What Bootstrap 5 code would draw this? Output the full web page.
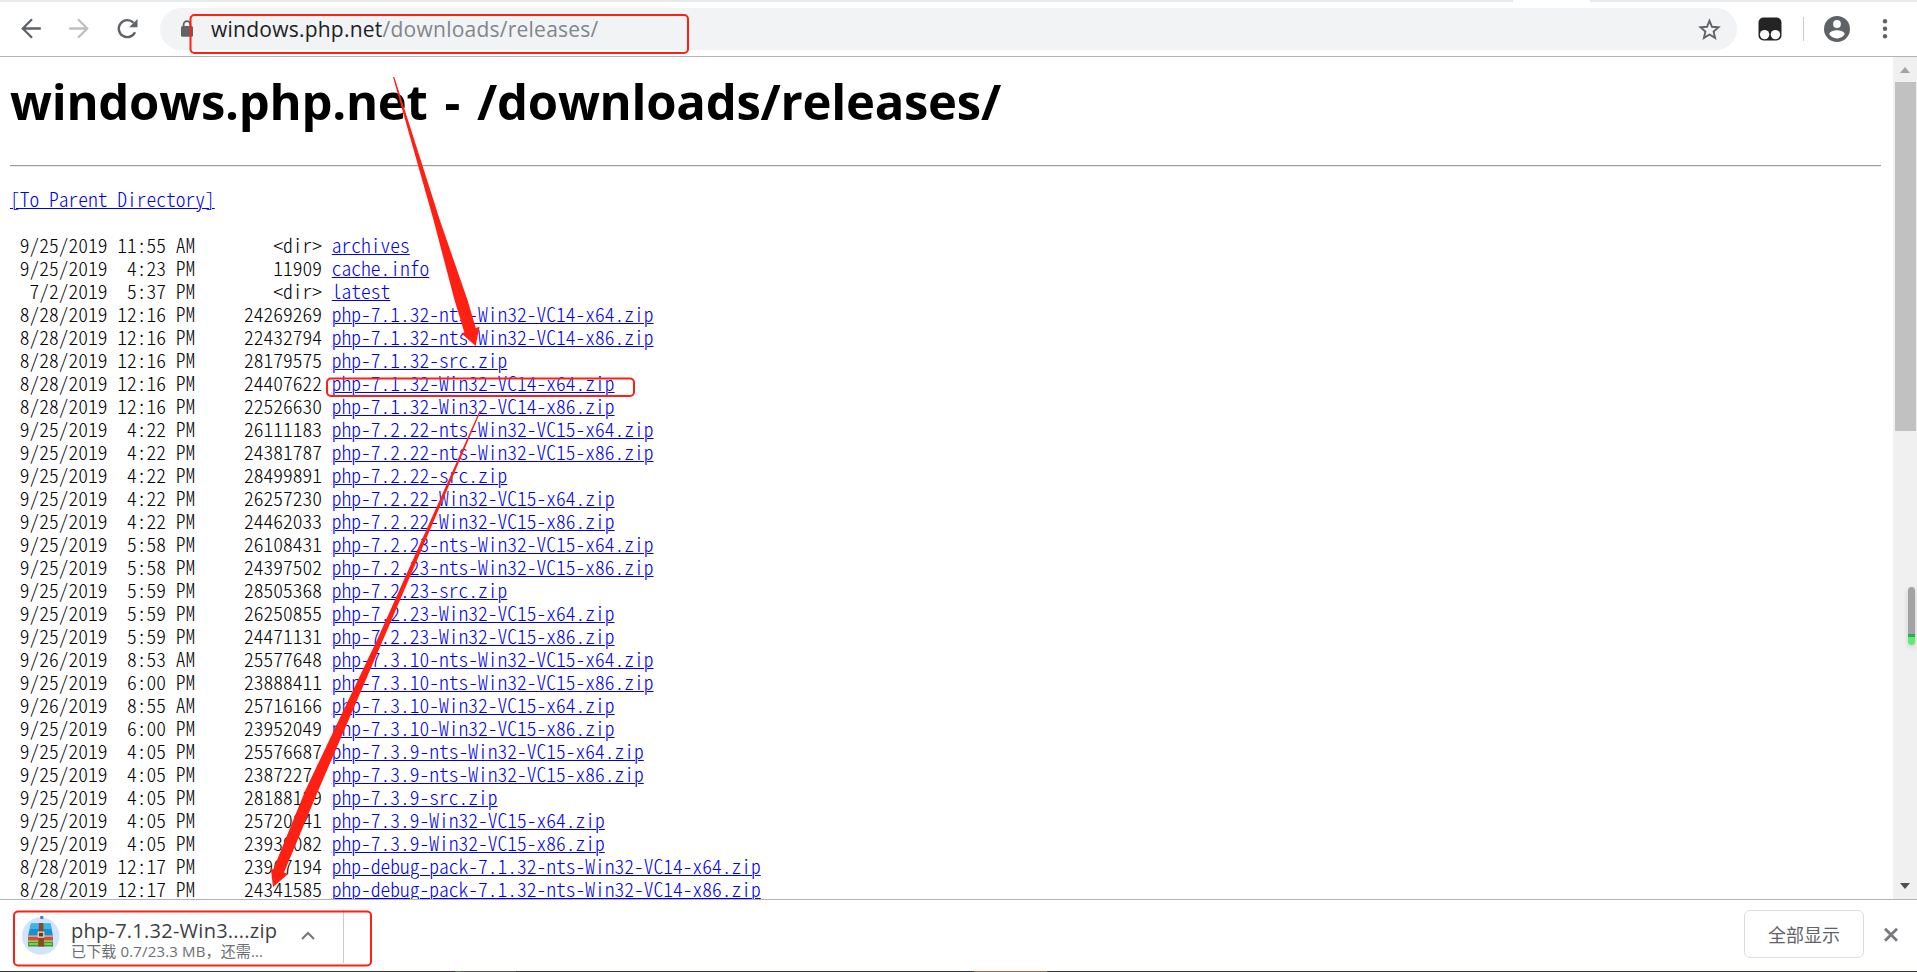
<!DOCTYPE html>
<html lang="zh-CN">
<head>
  <meta charset="UTF-8" />
  <meta name="viewport" content="width=device-width, initial-scale=1.0"/>
  <title>windows.php.net - /downloads/releases/</title>
  <link href="https://cdn.jsdelivr.net/npm/bootstrap@5.3.0/dist/css/bootstrap.min.css" rel="stylesheet">
  <style>
    body {
      background-color: #fff;
      font-family: "Open Sans", "Noto Sans CJK SC", sans-serif;
      color: #000;
    }

    /* Browser chrome */
    .tab-strip {
      height: 2px;
      background-color: #e7eaed;
    }

    .active-tab {
      width: 77px;
      margin-right: 327px;
      background-color: #fff;
    }

    .toolbar {
      height: 55px;
      padding-top: 6px;
      border-bottom: 1px solid #b4b4b6;
    }

    .toolbar svg {
      display: block;
    }

    .nav-icons {
      width: 160px;
      height: 42px;
      gap: 24px;
      padding-left: 20px;
    }

    .address-bar {
      height: 42px;
      border-radius: 21px;
      background-color: #f1f3f4;
      padding: 0 16px 0 20px;
    }

    .url-text {
      font-size: 21px;
      line-height: 42px;
      margin-left: 17px;
      letter-spacing: 0.24px;
      color: #202124;
    }

    .url-path {
      color: #80868b;
    }

    .toolbar-end {
      width: 180px;
      height: 42px;
      padding-left: 21px;
    }

    .toolbar-divider {
      width: 1px;
      height: 24px;
      margin: 0 20px 0 21px;
      background-color: #ccc;
    }

    /* Directory page */
    .page-area {
      height: 842px;
    }

    .page-body {
      padding: 6px 12px 0 10px;
    }

    .page-body h1 {
      font-size: 49px;
      font-weight: 700;
      line-height: 76px;
      letter-spacing: -0.25px;
      word-spacing: 4.5px;
      margin: 0 0 26px;
      white-space: nowrap;
    }

    .rule {
      height: 2px;
      border-top: 1px solid #9a9a9a;
      border-bottom: 1px solid #eee;
      margin-bottom: 20px;
    }

    .listing {
      font-family: "Noto Sans CJK SC", sans-serif;
      font-feature-settings: "hwid";
      font-weight: 300;
      font-size: 19.5px;
      line-height: 23px;
      margin: 0;
      overflow: visible;
    }

    .listing a {
      color: #0000ee;
      text-decoration-thickness: 1px;
    }

    .scroll-track {
      width: 24px;
      background-color: #f0f0f0;
      padding: 10px 1px 10px 2px;
    }

    .scroll-thumb {
      width: 21px;
      height: 349px;
      margin-top: 9px;
      background-color: #c1c1c1;
    }

    .arrow-up, .arrow-down {
      width: 0;
      height: 0;
      margin-left: 5px;
      border-left: 5.5px solid transparent;
      border-right: 5.5px solid transparent;
    }

    .arrow-up {
      border-bottom: 6px solid #a3a3a3;
    }

    .arrow-down {
      border-top: 6px solid #505050;
    }

    .side-gauge {
      left: 1908px;
      top: 587px;
      width: 7px;
      height: 58px;
      border-radius: 4px;
      background: linear-gradient(#a3a3a3 47px, #1fb45a 47px, #1fb45a 50px, #5fe878 50px);
      box-shadow: 0 2px 5px rgba(0, 0, 0, 0.15);
    }

    /* Download shelf */
    .shelf {
      height: 72px;
      border-top: 1px solid #b4b4b6;
      padding: 0 18px 0 21px;
    }

    .file-info {
      width: 212px;
      margin: 18px 0 0 11px;
      white-space: nowrap;
    }

    .file-name {
      font-size: 20px;
      line-height: 25px;
      letter-spacing: 0.25px;
      color: #3c4043;
    }

    .file-state {
      font-size: 15px;
      line-height: 16px;
      letter-spacing: 0.15px;
      color: #6b6e72;
    }

    .menu-caret {
      margin: 28px 0 0 17px;
    }

    .shelf-divider {
      width: 1px;
      height: 53px;
      margin: 10px 0 0 27px;
      background-color: #ccc;
    }

    .show-all {
      width: 120px;
      height: 48px;
      margin-top: 10px;
      border: 1px solid #dadce0;
      border-radius: 6px;
      font-size: 18px;
      color: #5f6368;
      padding: 2px 0 0;
    }

    .close-icon {
      margin: 27px 0 0 19px;
    }

    .desk-edge {
      height: 1px;
      background: linear-gradient(to right, #38362f 455px, #4b7a3f 455px, #4b7a3f 461px, #55564f 461px, #55564f 516px, #38362f 516px, #38362f 974px, #a86a33 974px, #a86a33 1047px, #38362f 1047px);
    }

    .notes {
      pointer-events: none;
    }
  </style>
</head>
<body class="vh-100 overflow-hidden position-relative">

  <div class="tab-strip d-flex justify-content-end">
    <div class="active-tab"></div>
  </div>

  <!-- Toolbar -->
  <div class="toolbar d-flex">
    <div class="nav-icons d-flex align-items-center">
      <svg width="24" height="24" viewBox="0 0 24 24" fill="none" stroke="#5f6368" stroke-width="2.3"><path d="M20.8 11.5H3M12 2.3L2.8 11.5l9.2 9.2"/></svg>
      <svg width="24" height="24" viewBox="0 0 24 24" fill="none" stroke="#bdbfc1" stroke-width="2.3"><path d="M1.2 11.5H19M10 2.3l9.2 9.2-9.2 9.2"/></svg>
      <svg width="24" height="24" viewBox="0 0 24 24"><path d="M19 15.2A8.5 8.5 0 1 1 17.5 5.8" fill="none" stroke="#5f6368" stroke-width="2.4"/><path d="M21.5 2v8.3h-8.3z" fill="#5f6368"/></svg>
    </div>
    <div class="address-bar d-flex align-items-center flex-grow-1">
      <svg width="14" height="18" viewBox="0 0 14 18"><path d="M3.6 7V4.6a3.4 3.4 0 0 1 6.8 0V7" fill="none" stroke="#5f6368" stroke-width="1.8"/><rect x="1" y="6" width="12" height="10.7" rx="1.5" fill="#5f6368"/></svg>
      <div class="url-text flex-grow-1">windows.php.net<span class="url-path">/downloads/releases/</span></div>
      <svg width="24" height="24" viewBox="0 0 24 24" fill="none" stroke="#5f6368" stroke-width="1.9"><path d="M12.5 3.8l2.5 6 6.5.5-4.9 4.3 1.5 6.3-5.6-3.4-5.6 3.4 1.5-6.3-4.9-4.3 6.5-.5z"/></svg>
    </div>
    <div class="toolbar-end d-flex align-items-center">
      <svg width="24" height="24" viewBox="0 0 24 24"><rect x=".5" y=".5" width="23" height="23" rx="5" fill="#242424"/><circle cx="6.6" cy="17.6" r="4.7" fill="#fff"/><circle cx="17.4" cy="17.6" r="4.7" fill="#fff"/></svg>
      <div class="toolbar-divider"></div>
      <svg width="26" height="26" viewBox="0 0 26 26"><circle cx="13" cy="13" r="13" fill="#5f6368"/><circle cx="13" cy="8" r="3.9" fill="#fff"/><path d="M5.3 18.3c0-2.8 5-4.1 7.7-4.1s7.7 1.3 7.7 4.1c-1.7 2.5-4.4 4.1-7.7 4.1s-6-1.6-7.7-4.1z" fill="#fff"/></svg>
      <svg class="ms-auto me-4" width="16" height="24" viewBox="0 0 16 24" fill="#5f6368"><circle cx="8" cy="4.3" r="2.2"/><circle cx="8" cy="11.8" r="2.2"/><circle cx="8" cy="19.3" r="2.2"/></svg>
    </div>
  </div>

  <!-- Page -->
  <div class="page-area d-flex overflow-hidden">
    <div class="page-body flex-grow-1">
      <h1>windows.php.net - /downloads/releases/</h1>
      <div class="rule"></div>
      <pre class="listing"><a href="#">[To Parent Directory]</a>

 9/25/2019 11:55 AM        &lt;dir&gt; <a href="#">archives</a>
 9/25/2019  4:23 PM        11909 <a href="#">cache.info</a>
  7/2/2019  5:37 PM        &lt;dir&gt; <a href="#">latest</a>
 8/28/2019 12:16 PM     24269269 <a href="#">php-7.1.32-nts-Win32-VC14-x64.zip</a>
 8/28/2019 12:16 PM     22432794 <a href="#">php-7.1.32-nts-Win32-VC14-x86.zip</a>
 8/28/2019 12:16 PM     28179575 <a href="#">php-7.1.32-src.zip</a>
 8/28/2019 12:16 PM     24407622 <a href="#">php-7.1.32-Win32-VC14-x64.zip</a>
 8/28/2019 12:16 PM     22526630 <a href="#">php-7.1.32-Win32-VC14-x86.zip</a>
 9/25/2019  4:22 PM     26111183 <a href="#">php-7.2.22-nts-Win32-VC15-x64.zip</a>
 9/25/2019  4:22 PM     24381787 <a href="#">php-7.2.22-nts-Win32-VC15-x86.zip</a>
 9/25/2019  4:22 PM     28499891 <a href="#">php-7.2.22-src.zip</a>
 9/25/2019  4:22 PM     26257230 <a href="#">php-7.2.22-Win32-VC15-x64.zip</a>
 9/25/2019  4:22 PM     24462033 <a href="#">php-7.2.22-Win32-VC15-x86.zip</a>
 9/25/2019  5:58 PM     26108431 <a href="#">php-7.2.23-nts-Win32-VC15-x64.zip</a>
 9/25/2019  5:58 PM     24397502 <a href="#">php-7.2.23-nts-Win32-VC15-x86.zip</a>
 9/25/2019  5:59 PM     28505368 <a href="#">php-7.2.23-src.zip</a>
 9/25/2019  5:59 PM     26250855 <a href="#">php-7.2.23-Win32-VC15-x64.zip</a>
 9/25/2019  5:59 PM     24471131 <a href="#">php-7.2.23-Win32-VC15-x86.zip</a>
 9/26/2019  8:53 AM     25577648 <a href="#">php-7.3.10-nts-Win32-VC15-x64.zip</a>
 9/25/2019  6:00 PM     23888411 <a href="#">php-7.3.10-nts-Win32-VC15-x86.zip</a>
 9/26/2019  8:55 AM     25716166 <a href="#">php-7.3.10-Win32-VC15-x64.zip</a>
 9/25/2019  6:00 PM     23952049 <a href="#">php-7.3.10-Win32-VC15-x86.zip</a>
 9/25/2019  4:05 PM     25576687 <a href="#">php-7.3.9-nts-Win32-VC15-x64.zip</a>
 9/25/2019  4:05 PM     23872274 <a href="#">php-7.3.9-nts-Win32-VC15-x86.zip</a>
 9/25/2019  4:05 PM     28188129 <a href="#">php-7.3.9-src.zip</a>
 9/25/2019  4:05 PM     25720841 <a href="#">php-7.3.9-Win32-VC15-x64.zip</a>
 9/25/2019  4:05 PM     23939082 <a href="#">php-7.3.9-Win32-VC15-x86.zip</a>
 8/28/2019 12:17 PM     23907194 <a href="#">php-debug-pack-7.1.32-nts-Win32-VC14-x64.zip</a>
 8/28/2019 12:17 PM     24341585 <a href="#">php-debug-pack-7.1.32-nts-Win32-VC14-x86.zip</a></pre>
    </div>
    <div class="scroll-track d-flex flex-column">
      <div class="arrow-up"></div>
      <div class="scroll-thumb"></div>
      <div class="arrow-down mt-auto"></div>
    </div>
  </div>

  <!-- Download shelf -->
  <div class="shelf d-flex align-items-start">
    <svg class="mt-3" width="39" height="40" viewBox="0 0 39 40">
      <circle cx="19.7" cy="20" r="18.7" fill="#d2e3fc"/>
      <rect x="19.3" y="0" width="3" height="3" fill="#3b7ddd"/>
      <path d="M10 7.5h19.5l2.5 12.2H7z" fill="#1b8fd3"/>
      <path d="M10 7.5h19.5l1.2 5.5H8.8z" fill="#3cb4ec"/>
      <rect x="7" y="19.7" width="25" height="5" fill="#d3502f"/>
      <rect x="7" y="24.7" width="25" height="5.8" fill="#3f9d2f"/>
      <path d="M7 25.2h25M7 20.2h25" stroke="#f2e8d0" stroke-width=".7"/>
      <path d="M8 28h23" stroke="#7ccc4a" stroke-width="2"/>
      <path d="M18 7h4.2l1 23.5h-6z" fill="#8a4a1e"/>
      <rect x="17.2" y="16.2" width="5.6" height="5" rx=".6" fill="#6c3a19" stroke="#e8e4dc" stroke-width="1.2"/>
    </svg>
    <div class="file-info">
      <div class="file-name">php-7.1.32-Win3....zip</div>
      <div class="file-state">已下载 0.7/23.3 MB，还需...</div>
    </div>
    <svg class="menu-caret" width="16" height="16" viewBox="0 0 16 16" fill="none" stroke="#77797c" stroke-width="2.2"><path d="M2 11l6-6 6 6"/></svg>
    <div class="shelf-divider"></div>
    <button class="btn show-all ms-auto">全部显示</button>
    <svg class="close-icon" width="16" height="16" viewBox="0 0 16 16" stroke="#77797c" stroke-width="2.8"><path d="M2 1.8l12 12M14 1.8l-12 12"/></svg>
  </div>
  <div class="desk-edge"></div>

  <div class="side-gauge position-absolute"></div>

  <!-- Red boxes and arrows lying over the window -->
  <svg class="notes position-absolute top-0 start-0" width="1917" height="972" viewBox="0 0 1917 972">
    <g fill="none" stroke="#ff2014" stroke-width="2">
      <rect x="190.5" y="15" width="497.5" height="38" rx="4"/>
      <rect x="327" y="378.5" width="307" height="17.5" rx="4"/>
      <rect x="14" y="911.5" width="357" height="54" rx="4"/>
    </g>
    <g fill="#ff2014">
      <path d="M393 77l1.3 0L439.8 220 467.5 300 475.8 328l3.8-1.3L475.6 346 461 333l3.4-.4L454.5 300 433.5 220z"/>
      <path d="M479.5 411l1.3 0L383 640 318.5 790 284 872.5l4.2 1.5L273 887 270.8 868.3l2.4 1.2L305.5 790 377 640z"/>
    </g>
  </svg>

  <script src="https://cdn.jsdelivr.net/npm/bootstrap@5.3.0/dist/js/bootstrap.bundle.min.js"></script>
</body>
</html>
